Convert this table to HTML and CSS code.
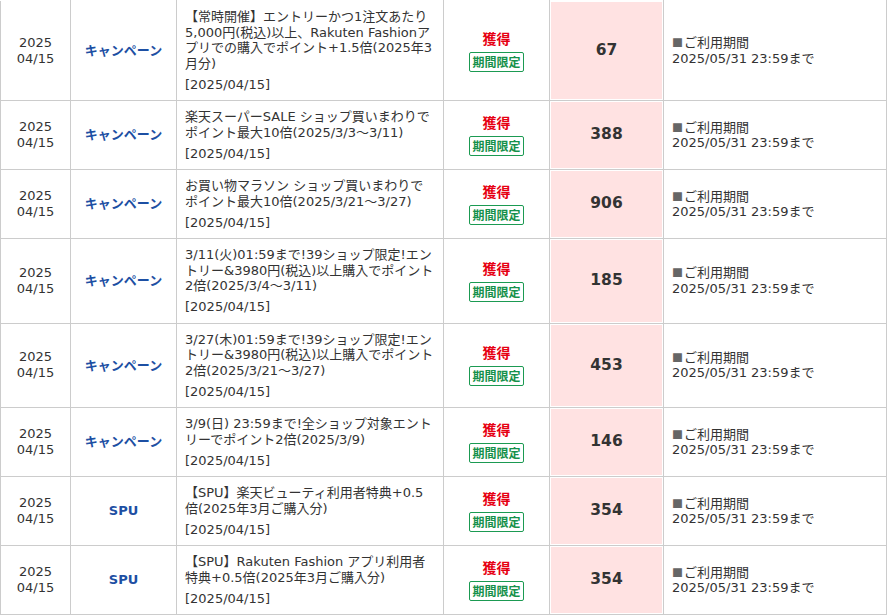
FILE: index.html
```html
<!DOCTYPE html>
<html lang="ja">
<head>
<meta charset="utf-8">
<title>ポイント獲得履歴</title>
<link rel="stylesheet" href="styles.css">
</head>
<body>
<table class="history">
  <colgroup>
    <col class="c-date"><col class="c-kind"><col class="c-desc"><col class="c-status"><col class="c-point"><col class="c-limit">
  </colgroup>
  <tbody>
    <tr>
      <td class="date">2025<br>04/15</td>
      <td class="kind">キャンペーン</td>
      <td class="desc"><div class="desc-text">【常時開催】エントリーかつ1注文あたり5,000円(税込)以上、Rakuten Fashionアプリでの購入でポイント+1.5倍(2025年3月分)</div><div class="desc-date">[2025/04/15]</div></td>
      <td class="status"><div class="get">獲得</div><span class="badge">期間限定</span></td>
      <td class="point">67</td>
      <td class="limit"><div><span class="sq">■</span>ご利用期間</div><div>2025/05/31 23:59まで</div></td>
    </tr>
    <tr>
      <td class="date">2025<br>04/15</td>
      <td class="kind">キャンペーン</td>
      <td class="desc"><div class="desc-text">楽天スーパーSALE ショップ買いまわりでポイント最大10倍(2025/3/3～3/11)</div><div class="desc-date">[2025/04/15]</div></td>
      <td class="status"><div class="get">獲得</div><span class="badge">期間限定</span></td>
      <td class="point">388</td>
      <td class="limit"><div><span class="sq">■</span>ご利用期間</div><div>2025/05/31 23:59まで</div></td>
    </tr>
    <tr>
      <td class="date">2025<br>04/15</td>
      <td class="kind">キャンペーン</td>
      <td class="desc"><div class="desc-text">お買い物マラソン ショップ買いまわりでポイント最大10倍(2025/3/21～3/27)</div><div class="desc-date">[2025/04/15]</div></td>
      <td class="status"><div class="get">獲得</div><span class="badge">期間限定</span></td>
      <td class="point">906</td>
      <td class="limit"><div><span class="sq">■</span>ご利用期間</div><div>2025/05/31 23:59まで</div></td>
    </tr>
    <tr>
      <td class="date">2025<br>04/15</td>
      <td class="kind">キャンペーン</td>
      <td class="desc"><div class="desc-text">3/11(火)01:59まで!39ショップ限定!エントリー&amp;3980円(税込)以上購入でポイント2倍(2025/3/4～3/11)</div><div class="desc-date">[2025/04/15]</div></td>
      <td class="status"><div class="get">獲得</div><span class="badge">期間限定</span></td>
      <td class="point">185</td>
      <td class="limit"><div><span class="sq">■</span>ご利用期間</div><div>2025/05/31 23:59まで</div></td>
    </tr>
    <tr>
      <td class="date">2025<br>04/15</td>
      <td class="kind">キャンペーン</td>
      <td class="desc"><div class="desc-text">3/27(木)01:59まで!39ショップ限定!エントリー&amp;3980円(税込)以上購入でポイント2倍(2025/3/21～3/27)</div><div class="desc-date">[2025/04/15]</div></td>
      <td class="status"><div class="get">獲得</div><span class="badge">期間限定</span></td>
      <td class="point">453</td>
      <td class="limit"><div><span class="sq">■</span>ご利用期間</div><div>2025/05/31 23:59まで</div></td>
    </tr>
    <tr>
      <td class="date">2025<br>04/15</td>
      <td class="kind">キャンペーン</td>
      <td class="desc"><div class="desc-text">3/9(日) 23:59まで!全ショップ対象エントリーでポイント2倍(2025/3/9)</div><div class="desc-date">[2025/04/15]</div></td>
      <td class="status"><div class="get">獲得</div><span class="badge">期間限定</span></td>
      <td class="point">146</td>
      <td class="limit"><div><span class="sq">■</span>ご利用期間</div><div>2025/05/31 23:59まで</div></td>
    </tr>
    <tr>
      <td class="date">2025<br>04/15</td>
      <td class="kind">SPU</td>
      <td class="desc"><div class="desc-text">【SPU】楽天ビューティ利用者特典+0.5倍(2025年3月ご購入分)</div><div class="desc-date">[2025/04/15]</div></td>
      <td class="status"><div class="get">獲得</div><span class="badge">期間限定</span></td>
      <td class="point">354</td>
      <td class="limit"><div><span class="sq">■</span>ご利用期間</div><div>2025/05/31 23:59まで</div></td>
    </tr>
    <tr>
      <td class="date">2025<br>04/15</td>
      <td class="kind">SPU</td>
      <td class="desc"><div class="desc-text">【SPU】Rakuten Fashion アプリ利用者特典+0.5倍(2025年3月ご購入分)</div><div class="desc-date">[2025/04/15]</div></td>
      <td class="status"><div class="get">獲得</div><span class="badge">期間限定</span></td>
      <td class="point">354</td>
      <td class="limit"><div><span class="sq">■</span>ご利用期間</div><div>2025/05/31 23:59まで</div></td>
    </tr>
  </tbody>
</table>
</body>
</html>
```

FILE: styles.css
```css
html, body {
  margin: 0;
  padding: 0;
  background: #fff;
}

body {
  font-family: "DejaVu Sans", "Noto Sans CJK JP", sans-serif;
  font-size: 13px;
  line-height: 15.5px;
  color: #333;
}

.history {
  border-collapse: collapse;
  table-layout: fixed;
  width: 886px;
}

.c-date { width: 70px; }
.c-kind { width: 106px; }
.c-desc { width: 267px; }
.c-status { width: 106px; }
.c-point { width: 114px; }
.c-limit { width: 223px; }

.history td {
  border: 1px solid #cccccc;
  vertical-align: middle;
  padding: 8px 8px;
}

.history tr:first-child td {
  border-top-color: #fff;
}

.date {
  text-align: center;
  line-height: 16px;
}

.kind {
  text-align: center;
  color: #1d4fa3;
  font-weight: bold;
}

.desc-date {
  margin-top: 5.5px;
}

.status {
  text-align: center;
}

.get {
  color: #e60012;
  font-weight: bold;
  font-size: 14px;
  line-height: 18px;
  margin-bottom: 4px;
}

.badge {
  display: inline-block;
  border: 1px solid #1b9a52;
  border-radius: 2px;
  color: #16914b;
  font-weight: bold;
  font-size: 12px;
  line-height: 18px;
  padding: 0 2px;
  font-family: "Noto Sans CJK JP", sans-serif;
}

.history td.point {
  background: #ffe2e2;
  box-shadow: inset 0 0 0 1px #fff;
  text-align: center;
  font-weight: bold;
  font-size: 15.5px;
  color: #333;
}

.history td.limit {
  padding-left: 8px;
}

.sq {
  font-family: "Noto Sans CJK JP", sans-serif;
  font-size: 11px;
  color: #666;
  margin-right: 1px;
}
```
